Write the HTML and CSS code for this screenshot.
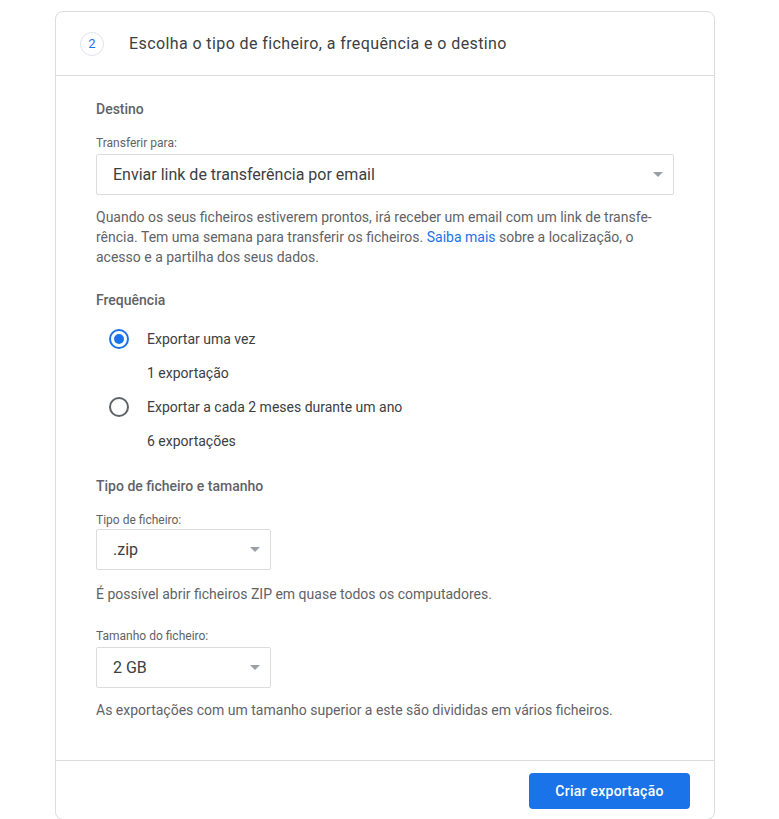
FILE: index.html
```html
<!DOCTYPE html>
<html lang="pt">
<head>
  <meta charset="UTF-8">
  <meta name="viewport" content="width=device-width, initial-scale=1.0">
  <title>Escolha o tipo de ficheiro</title>
  <link rel="stylesheet" href="styles.css">
</head>
<body>

  <div class="step-card">
    <!-- Step header -->
    <div class="step-header">
      <span class="step-num">2</span>
      <h2 class="step-title">Escolha o tipo de ficheiro, a frequência e o destino</h2>
    </div>

    <div class="step-body">
      <!-- Destino -->
      <h3 class="section-title">Destino</h3>
      <label class="field-label field-label-top">Transferir para:</label>
      <div class="select select-wide">
        <span>Enviar link de transferência por email</span>
        <span class="arrow"></span>
      </div>
      <p class="hint hint-block">
        Quando os seus ficheiros estiverem prontos, irá receber um email com um link de transfe-<br>rência. Tem uma semana para transferir os ficheiros. <a href="#">Saiba mais</a> sobre a localização, o<br>acesso e a partilha dos seus dados.
      </p>

      <!-- Frequencia -->
      <h3 class="section-title">Frequência</h3>
      <div class="radio-group">
        <div class="radio-row">
          <span class="radio checked"></span>
          <span>Exportar uma vez</span>
        </div>
        <div class="radio-sub">1 exportação</div>
        <div class="radio-row">
          <span class="radio"></span>
          <span>Exportar a cada 2 meses durante um ano</span>
        </div>
        <div class="radio-sub">6 exportações</div>
      </div>

      <!-- Tipo e tamanho -->
      <h3 class="section-title">Tipo de ficheiro e tamanho</h3>
      <label class="field-label">Tipo de ficheiro:</label>
      <div class="select select-small">
        <span>.zip</span>
        <span class="arrow"></span>
      </div>
      <p class="hint hint-small">É possível abrir ficheiros ZIP em quase todos os computadores.</p>

      <label class="field-label field-label-gap">Tamanho do ficheiro:</label>
      <div class="select select-small">
        <span>2 GB</span>
        <span class="arrow"></span>
      </div>
      <p class="hint">As exportações com um tamanho superior a este são divididas em vários ficheiros.</p>
    </div>

    <div class="step-footer">
      <button class="btn-primary">Criar exportação</button>
    </div>
  </div>

</body>
</html>
```

FILE: styles.css
```css
/* Basic styling */
body {
  margin: 0;
  background: #fff;
  font-family: Roboto, "Noto Sans", Arial, sans-serif;
  color: #5f6368;
}

.step-card {
  margin: 11px 0 0 55px;
  width: 658px;
  border: 1px solid #dadce0;
  border-radius: 8px;
  background: #fff;
}

/* Header */
.step-header {
  display: flex;
  align-items: center;
  height: 63px;
  padding: 0 0 0 24px;
  border-bottom: 1px solid #dadce0;
}

.step-num {
  width: 22px;
  height: 22px;
  border: 1px solid #dfe3ea;
  border-radius: 50%;
  display: flex;
  align-items: center;
  justify-content: center;
  font-size: 13px;
  color: #1a73e8;
  margin-right: 25px;
}

.step-title {
  margin: 0;
  font-size: 16px;
  font-weight: 400;
  color: #3c4043;
  letter-spacing: 0.4px;
}

/* Body */
.step-body {
  padding: 24px 40px 40px 40px;
}

.section-title {
  margin: 0 0 18px 0;
  font-size: 14px;
  font-weight: 500;
  color: #5f6368;
  line-height: 18px;
}

.field-label {
  display: block;
  font-size: 12px;
  line-height: 14px;
  color: #5f6368;
  margin-bottom: 2px;
}

.field-label-top {
  margin-bottom: 4px;
}

.field-label-gap {
  margin-top: 25px;
  margin-bottom: 4px;
}

.select {
  box-sizing: border-box;
  height: 41px;
  border: 1px solid #dadce0;
  border-radius: 2px;
  display: flex;
  align-items: center;
  justify-content: space-between;
  padding: 0 8px 0 16px;
  font-size: 16px;
  color: #3c4043;
}

.select-wide {
  width: 578px;
}

.select-small {
  width: 175px;
}

.arrow {
  width: 0;
  height: 0;
  border-left: 5px solid transparent;
  border-right: 5px solid transparent;
  border-top: 5px solid #9aa0a6;
  margin-right: 2px;
}

.hint {
  margin: 12px 0 0 0;
  font-size: 14px;
  line-height: 20px;
  color: #5f6368;
}

.hint-small {
  margin-top: 14px;
}

.hint-block {
  margin-bottom: 24px;
}

.hint a {
  color: #1a73e8;
  text-decoration: none;
}

/* Radios */
.radio-group {
  margin: -5px 0 19px 0;
  color: #3c4043;
  font-size: 14px;
}

.radio-row {
  display: flex;
  align-items: center;
  height: 34px;
  padding-left: 13px;
}

.radio-sub {
  height: 34px;
  line-height: 34px;
  padding-left: 51px;
}

.radio {
  box-sizing: border-box;
  width: 20px;
  height: 20px;
  border: 2px solid #5f6368;
  border-radius: 50%;
  margin-right: 18px;
  position: relative;
}

.radio.checked {
  border-color: #1a73e8;
}

.radio.checked::after {
  content: "";
  position: absolute;
  left: 3px;
  top: 3px;
  width: 10px;
  height: 10px;
  border-radius: 50%;
  background: #1a73e8;
}

/* Footer */
.step-footer {
  border-top: 1px solid #dadce0;
  display: flex;
  justify-content: flex-end;
  padding: 12px 24px 10px 0;
}

.btn-primary {
  width: 161px;
  height: 36px;
  border: none;
  border-radius: 4px;
  background: #1a73e8;
  color: #fff;
  font-family: Roboto, "Noto Sans", Arial, sans-serif;
  font-size: 14px;
  font-weight: 500;
  letter-spacing: 0.25px;
}
```
